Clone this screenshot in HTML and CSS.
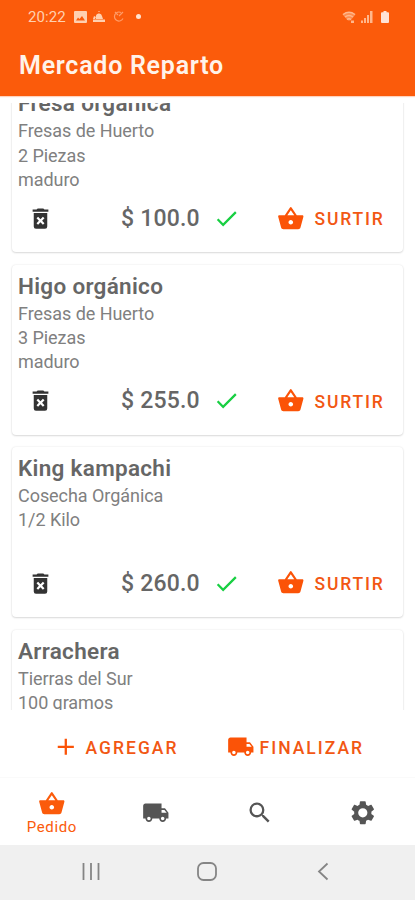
FILE: index.html
```html
<!DOCTYPE html>
<html lang="es">
<head>
<meta charset="utf-8">
<title>Mercado Reparto</title>
<link rel="stylesheet" href="styles.css">
</head>
<body>
<svg class="sprite" aria-hidden="true">
  <symbol id="basket" viewBox="0 0 24 24"><path d="M17.21 9l-4.38-6.56a1 1 0 0 0-1.66.01L6.79 9H2c-.55 0-1 .45-1 1 0 .09.01.18.04.27l2.54 9.27C3.81 20.38 4.58 21 5.5 21h13c.92 0 1.69-.62 1.93-1.46l2.54-9.27L23 10c0-.55-.45-1-1-1h-4.79zM9 9l3-4.4L15 9H9zm3 8c-1.1 0-2-.9-2-2s.9-2 2-2 2 .9 2 2-.9 2-2 2z"/></symbol>
  <symbol id="trash" viewBox="0 0 24 24"><path fill-rule="evenodd" d="M6 7h12v12a2 2 0 0 1-2 2H8a2 2 0 0 1-2-2zM8.460 11.880L10.590 14l-2.130 2.120 1.410 1.410L12 15.410l2.120 2.120 1.410-1.410L13.410 14l2.120-2.120-1.410-1.410L12 12.590l-2.120-2.120zM15.500 4l-1-1h-5l-1 1H5v2h14V4z"/></symbol>
  <symbol id="check" viewBox="0 0 24 24"><path d="M9 16.170L4.830 12l-1.420 1.410L9 19 21 7l-1.410-1.410z"/></symbol>
  <symbol id="truck" viewBox="0 0 24 24"><path d="M20 8h-3V4H3c-1.100 0-2 .9-2 2v11h2c0 1.660 1.340 3 3 3s3-1.340 3-3h6c0 1.660 1.340 3 3 3s3-1.340 3-3h2v-5l-3-4zM6 18.500c-.83 0-1.500-.67-1.500-1.500s.67-1.500 1.500-1.500 1.500.67 1.500 1.500-.67 1.500-1.500 1.500zm13.500-9l1.960 2.500H17V9.500h2.500zm-1.500 9c-.83 0-1.500-.67-1.500-1.500s.67-1.500 1.500-1.500 1.500.67 1.500 1.500-.67 1.500-1.500 1.500z"/></symbol>
</svg>
<div class="phone">
  <header class="appbar">
    <div class="status">
      <span class="clock">20:22</span>
      <svg class="s-image" viewBox="0 0 13 12"><path fill-rule="evenodd" d="M1 0h11a1 1 0 0 1 1 1v10a1 1 0 0 1-1 1H1a1 1 0 0 1-1-1V1a1 1 0 0 1 1-1zM2 9.500h9L8 5 5.500 8 4 6.500z"/></svg>
      <svg class="s-cloud" viewBox="0 0 12 12"><path d="M3 6a3 3 0 0 1 6-1l1 3H3zM0 8.500h12V11H0zM1 5l2 1-1 2H0zM5 1l1-1 1 1z"/></svg>
      <svg class="s-sync" viewBox="0 0 12 12"><path d="M8 1.500a4.500 4.500 0 1 0 2 6M6 5l4-4M2 1l3 3"/></svg>
      <span class="dot"></span>
      <span class="spring"></span>
      <svg class="s-wifi" viewBox="0 0 14 12"><path d="M0.500 3.500Q7-1.500 13.500 3.500L8.500 9.500H6z" opacity=".55"/><path d="M1 3.500Q7-1 13 3.500M3 6q4-3 8 0M5 8.500q2-1.500 4 0" fill="none" stroke="currentColor" stroke-width="1.400"/><path d="M9 9.500h3v2.500h-3z"/></svg>
      <svg class="s-signal" viewBox="0 0 12 12"><path d="M0 9.500h2V12H0zM3 7h2v5H3zM6 4h2v8H6zM9 0h2.500v12H9z"/></svg>
      <svg class="s-battery" viewBox="0 0 8 12"><path d="M2.500 0h3v1.200H7a1 1 0 0 1 1 1V11a1 1 0 0 1-1 1H1a1 1 0 0 1-1-1V2.200a1 1 0 0 1 1-1h1.500z"/></svg>
    </div>
    <h1>Mercado Reparto</h1>
  </header>
  <main class="list">
    <article class="card first">
      <h2>Fresa orgánica</h2>
      <div class="details"><p>Fresas de Huerto</p><p>2 Piezas</p><p>maduro</p></div>
      <div class="row"><svg class="trash"><use href="#trash"/></svg><span class="price">$ 100.0</span><svg class="check"><use href="#check"/></svg><a class="surtir"><svg class="icon"><use href="#basket"/></svg><span>SURTIR</span></a></div>
    </article>
    <article class="card">
      <h2>Higo orgánico</h2>
      <div class="details"><p>Fresas de Huerto</p><p>3 Piezas</p><p>maduro</p></div>
      <div class="row"><svg class="trash"><use href="#trash"/></svg><span class="price">$ 255.0</span><svg class="check"><use href="#check"/></svg><a class="surtir"><svg class="icon"><use href="#basket"/></svg><span>SURTIR</span></a></div>
    </article>
    <article class="card">
      <h2>King kampachi</h2>
      <div class="details"><p>Cosecha Orgánica</p><p>1/2 Kilo</p></div>
      <div class="row"><svg class="trash"><use href="#trash"/></svg><span class="price">$ 260.0</span><svg class="check"><use href="#check"/></svg><a class="surtir"><svg class="icon"><use href="#basket"/></svg><span>SURTIR</span></a></div>
    </article>
    <article class="card">
      <h2>Arrachera</h2>
      <div class="details"><p>Tierras del Sur</p><p>100 gramos</p></div>
    </article>
  </main>
  <div class="actions">
    <a class="add"><svg viewBox="0 0 24 24"><path d="M19 13h-6v6h-2v-6H5v-2h6V5h2v6h6v2z"/></svg><span>AGREGAR</span></a>
    <a class="finish"><svg><use href="#truck"/></svg><span>FINALIZAR</span></a>
  </div>
  <nav class="tabs">
    <a class="active"><svg><use href="#basket"/></svg><span>Pedido</span></a>
    <a><svg><use href="#truck"/></svg></a>
    <a><svg viewBox="0 0 24 24"><path d="M15.500 14h-.79l-.28-.27A6.471 6.471 0 0 0 16 9.500 6.500 6.500 0 1 0 9.500 16c1.610 0 3.090-.59 4.230-1.570l.27.28v.79l5 4.990L20.490 19l-4.990-5zm-6 0C7.010 14 5 11.990 5 9.500S7.010 5 9.500 5 14 7.010 14 9.500 11.990 14 9.500 14z"/></svg></a>
    <a><svg viewBox="0 0 24 24"><path fill-rule="evenodd" d="M19.430 12.980c.04-.32.07-.64.07-.98s-.03-.66-.07-.98l2.110-1.650c.19-.15.24-.42.12-.64l-2-3.460c-.12-.22-.39-.3-.61-.22l-2.490 1c-.52-.4-1.080-.73-1.690-.98l-.38-2.650A.488.488 0 0 0 14 2h-4c-.25 0-.46.18-.49.42l-.38 2.650c-.61.25-1.170.59-1.690.98l-2.490-1c-.23-.09-.49 0-.61.22l-2 3.460c-.13.22-.07.49.12.64l2.110 1.650c-.04.32-.07.65-.07.98s.03.66.07.98l-2.110 1.650c-.19.15-.24.42-.12.64l2 3.460c.12.22.39.3.61.22l2.490-1c.52.4 1.080.73 1.690.98l.38 2.650c.03.24.24.42.49.42h4c.25 0 .46-.18.49-.42l.38-2.650c.61-.25 1.170-.59 1.690-.98l2.490 1c.23.09.49 0 .61-.22l2-3.460c.12-.22.07-.49-.12-.64zM12 16a4 4 0 1 1 0-8 4 4 0 0 1 0 8z"/></svg></a>
  </nav>
  <footer class="system">
    <svg viewBox="0 0 24 24"><path d="M4.500 4v17M12 4v17M19.500 4v17"/></svg>
    <svg viewBox="0 0 24 24"><rect x="3" y="4" width="18" height="17" rx="5.500"/></svg>
    <svg viewBox="0 0 24 24"><path d="M15.500 4.500L7 12.500l8.500 8"/></svg>
  </footer>
</div>
</body>
</html>
```
FILE: styles.css
```css
* { box-sizing: border-box; }
body { margin: 0; font-family: Roboto, "Liberation Sans", sans-serif; background: #fff; }
h1, h2, p { margin: 0; }
svg { fill: currentColor; flex: none; display: block; }
.sprite { position: absolute; width: 0; height: 0; }
.phone { width: 415px; height: 900px; display: flex; flex-direction: column; overflow: hidden; }

.appbar { height: 96px; flex: none; background: #fb5b0b; color: #fff3e9; box-shadow: 0 1px 1px #fb5b0b44; }
.status { height: 32px; padding: 1px 26px 0 28px; display: flex; align-items: center; color: #ffd0b0; }
.clock { width: 38px; font-size: 15px; letter-spacing: .1px; }
.s-image { width: 13px; height: 12px; margin-left: 8px; }
.s-cloud { width: 12px; height: 12px; margin-left: 6px; }
.s-sync { width: 12px; height: 12px; margin-left: 8px; fill: none; stroke: #ff9c68; stroke-width: 1.2; }
.dot { width: 5px; height: 5px; margin-left: 11px; border-radius: 50%; background: #ffe3d0; }
.spring { flex: 1; }
.s-wifi { width: 14px; height: 12px; margin-right: 5px; color: #ffb78c; }
.s-signal { width: 12px; height: 12px; margin-right: 8px; color: #ffb78c; }
.s-battery { width: 8px; height: 12px; color: #ffe3d6; }
h1 { padding-left: 19px; font-size: 25px; font-weight: 600; line-height: 68px; letter-spacing: .75px; }

.list { height: 607px; margin-top: 7px; flex: none; overflow: hidden; padding: 0 12px; display: flex; flex-direction: column; gap: 12.4px; }
.card { height: 170px; flex: none; padding: 8px 6px 0; border-radius: 4px; background: #fff; box-shadow: 0 1px 2px #00000020, 0 0 2px #0000001c; color: #666; display: flex; flex-direction: column; }
.first { margin-top: -20.6px; }
h2 { font-size: 22.500px; font-weight: 600; line-height: 27px; letter-spacing: .3px; color: #666; }
.details { height: 74px; flex: none; padding-top: 2px; font-size: 18px; line-height: 24.3px; color: #808080; letter-spacing: -.05px; }
.row { height: 54px; display: flex; align-items: center; }
.trash { width: 27px; height: 27px; margin-left: 9px; color: #333; }
.price { width: 78px; margin-left: 67px; font-size: 23px; font-weight: 500; letter-spacing: .2px; white-space: nowrap; }
.check { width: 27px; height: 27px; margin-left: 14px; color: #18cf42; }
.surtir { margin-left: 37px; display: flex; align-items: center; gap: 10px; color: #f25713; font-size: 17.500px; font-weight: 500; letter-spacing: 1.8px; }
.surtir span { padding-top: 2px; }
.icon { width: 27.6px; height: 27.6px; color: #fb5307; }

.actions { height: 67px; flex: none; padding: 7px 0 0 52px; display: flex; align-items: center; color: #f25713; font-size: 17.500px; font-weight: 500; letter-spacing: 2px; }
.actions a { display: flex; align-items: center; }
.actions span { padding-top: 1px; }
.actions svg { width: 27.6px; height: 27.6px; color: #fb5307; }
.add { width: 175px; gap: 6px; }
.finish { gap: 5px; }

.tabs { height: 68px; flex: none; padding-top: 3px; display: grid; grid-template-columns: repeat(4, 1fr); border-top: 1px solid #fafafa; color: #555; }
.tabs a { display: flex; flex-direction: column; align-items: center; justify-content: center; }
.tabs svg { width: 27.6px; height: 27.6px; }
.tabs .active { color: #fb5b0b; }
.active span { padding-top: 1px; font-size: 15px; line-height: 18px; letter-spacing: .6px; }

.system { height: 55px; flex: none; background: #f0f0f0; padding: 0 33px 4px; display: grid; grid-template-columns: repeat(3, 1fr); align-items: center; justify-items: center; }
.system svg { width: 24px; height: 24px; fill: none; stroke: #858585; stroke-width: 1.8; }
```
